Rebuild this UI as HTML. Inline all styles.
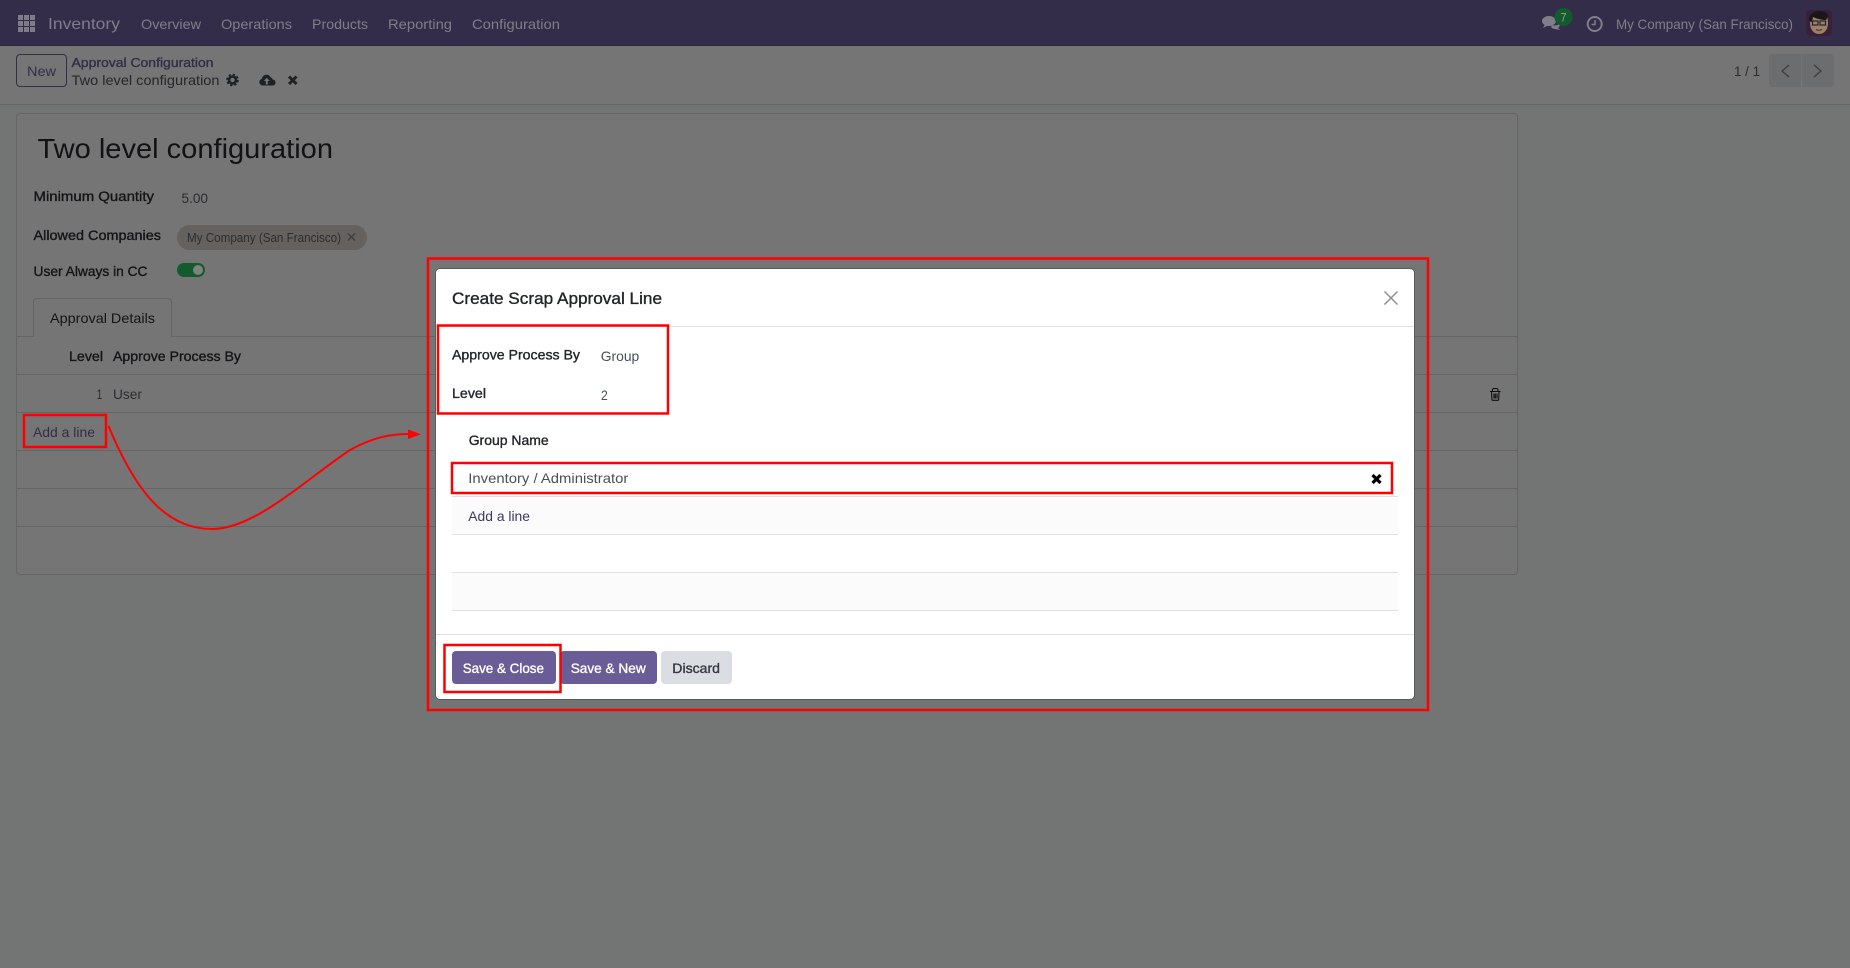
<!DOCTYPE html>
<html lang="en"><head><meta charset="utf-8"><title>Two level configuration</title>
<style>
html,body{margin:0;padding:0;width:1850px;height:968px;overflow:hidden;background:#737474}
div{position:absolute;box-sizing:border-box}
svg{position:absolute;left:0;top:0}
text{font-family:"Liberation Sans",sans-serif;font-size:14px;fill:#2a2d30}
.m{stroke:currentColor;stroke-width:.35}
.l{color:#131416;fill:#131416}
.n{fill:#807d8a}
.p{fill:#332d49}
</style></head><body>
<div style="left:0;top:0;width:1850px;height:46px;background:#332d49;border-bottom:1px solid #2b2740"></div>
<div style="left:0;top:46px;width:1850px;height:59px;background:#757575;border-bottom:1px solid #646566"></div>
<div style="left:16px;top:54px;width:51px;height:33px;border:1px solid #332d49;border-radius:4px"></div>
<div style="left:1769px;top:54px;width:32px;height:33px;background:#6b6d6f;border-radius:4px 0 0 4px"></div>
<div style="left:1802px;top:54px;width:32px;height:33px;background:#6b6d6f;border-radius:0 4px 4px 0"></div>

<div style="left:16px;top:113px;width:1502px;height:462px;background:#757575;border:1px solid #646566;border-radius:4px"></div>
<div style="left:177px;top:225px;width:190px;height:25px;background:#65615f;border-radius:13px"></div>
<div style="left:177px;top:263px;width:28px;height:14px;background:#135a2c;border-radius:7px"></div>
<div style="left:193px;top:265px;width:10px;height:10px;background:#7f837f;border-radius:50%"></div>
<div style="left:33px;top:298px;width:139px;height:39px;background:#757575;border:1px solid #646566;border-bottom:0;border-radius:4px 4px 0 0"></div>
<div style="left:17px;top:336px;width:16px;height:1px;background:#646566"></div>
<div style="left:172px;top:336px;width:1345px;height:1px;background:#646566"></div>
<div style="left:17px;top:374px;width:1500px;height:1px;background:#646566"></div>
<div style="left:17px;top:412px;width:1500px;height:1px;background:#646566"></div>
<div style="left:17px;top:450px;width:1500px;height:1px;background:#646566"></div>
<div style="left:17px;top:488px;width:1500px;height:1px;background:#646566"></div>
<div style="left:17px;top:526px;width:1500px;height:1px;background:#646566"></div>

<div style="left:436px;top:269px;width:978px;height:430px;background:#fff;border-radius:4px;box-shadow:0 0 0 1px #5a5b5b">
 <div style="left:0;top:57px;width:978px;height:1px;background:#dee2e6"></div>
 <div style="left:16px;top:227px;width:946px;height:1px;background:#dee2e6"></div>
 <div style="left:16px;top:228px;width:946px;height:38px;background:#fbfbfc;border-bottom:1px solid #dee2e6"></div>
 <div style="left:16px;top:266px;width:946px;height:38px;background:#fff;border-bottom:1px solid #dee2e6"></div>
 <div style="left:16px;top:304px;width:946px;height:38px;background:#fbfbfc;border-bottom:1px solid #dee2e6"></div>
 <div style="left:0;top:365px;width:978px;height:1px;background:#dee2e6"></div>
 <div style="left:16px;top:382px;width:104px;height:33px;background:#6a5c97;border-radius:4px"></div>
 <div style="left:124px;top:382px;width:97px;height:33px;background:#6a5c97;border-radius:4px"></div>
 <div style="left:225px;top:382px;width:71px;height:33px;background:#dadde2;border-radius:4px"></div>
</div>

<svg width="1850" height="968" viewBox="0 0 1850 968" xmlns="http://www.w3.org/2000/svg">
 <!-- nav -->
 <g fill="#7f7c88">
  <rect x="18" y="15" width="5" height="5"/><rect x="24" y="15" width="5" height="5"/><rect x="30" y="15" width="5" height="5"/>
  <rect x="18" y="21" width="5" height="5"/><rect x="24" y="21" width="5" height="5"/><rect x="30" y="21" width="5" height="5"/>
  <rect x="18" y="27" width="5" height="5"/><rect x="24" y="27" width="5" height="5"/><rect x="30" y="27" width="5" height="5"/>
 </g>
 <text class="n" x="48" y="29" style="font-size:16px" textLength="72" lengthAdjust="spacingAndGlyphs">Inventory</text>
 <text class="n" x="141" y="29" textLength="60" lengthAdjust="spacingAndGlyphs">Overview</text>
 <text class="n" x="221" y="29" textLength="71" lengthAdjust="spacingAndGlyphs">Operations</text>
 <text class="n" x="312" y="29" textLength="56" lengthAdjust="spacingAndGlyphs">Products</text>
 <text class="n" x="388" y="29" textLength="64" lengthAdjust="spacingAndGlyphs">Reporting</text>
 <text class="n" x="472" y="29" textLength="88" lengthAdjust="spacingAndGlyphs">Configuration</text>

 <g fill="#807e88">
  <ellipse cx="1549" cy="21" rx="7" ry="5"/><path d="M1545 24l-2 4 6-3z"/>
  <path d="M1552 25c3 1 6 0 8-1 0 2-1 3-2 4l2 2-5-1c-2 0-3-1-4-2z"/>
 </g>
 <circle cx="1563.5" cy="17" r="9" fill="#135a2c"/>
 <text x="1560.5" y="21.5" style="font-size:12px;fill:#98a09a" textLength="6" lengthAdjust="spacingAndGlyphs">7</text>
 <circle cx="1594.7" cy="24" r="7" fill="none" stroke="#807e88" stroke-width="2"/>
 <path d="M1595 20v4.5h-3.5" fill="none" stroke="#807e88" stroke-width="1.5"/>
 <text class="n" x="1616" y="29" textLength="177" lengthAdjust="spacingAndGlyphs">My Company (San Francisco)</text>
 <rect x="1806" y="10" width="26" height="26" rx="4" fill="#38203a"/>
 <path d="M1810 23c0-7 3-10 9-10s9 3 9 10c0 7-4 11-9 11s-9-4-9-11z" fill="#9c8068"/>
 <path d="M1809 21c-1-6 4-10 10-10 5 0 9 2 9 5l-2 4c-4 0-9-1-13-3l-1 5z" fill="#1a171b"/>
 <g fill="none" stroke="#26242a" stroke-width="1.2"><rect x="1812.5" y="21" width="5.5" height="4"/><rect x="1820" y="21" width="5.5" height="4"/></g>
 <path d="M1816 29.500c2 1 4 1 6 0" stroke="#4d3228" fill="none"/>

 <!-- control panel -->
 <text class="p" x="27" y="76" textLength="29" lengthAdjust="spacingAndGlyphs">New</text>
 <text class="p m" x="71.5" y="67" style="font-size:13px;color:#332d49" textLength="142" lengthAdjust="spacingAndGlyphs">Approval Configuration</text>
 <text x="71.5" y="85" textLength="148" lengthAdjust="spacingAndGlyphs" style="fill:#24272a">Two level configuration</text>
 <g fill="none" stroke="#1f2224"><circle cx="232.5" cy="80" r="3.5" stroke-width="2.6"/><circle cx="232.5" cy="80" r="5.2" stroke-width="2.2" stroke-dasharray="2.2 1.9"/></g>
 <path d="M262.500 85.500a3.400 3.400 0 0 1-.6-6.700 4.500 4.500 0 0 1 8.600-1.500 3.200 3.200 0 0 1 2.200 2.200 3.100 3.100 0 0 1 .8 6z" fill="#1f2224"/>
 <path d="M265.800 84.500v-3.500h-2l3-3.200 3 3.200h-2v3.500z" fill="#757575"/>
 <path d="M289 76.500l7.500 7.500M296.500 76.500l-7.500 7.500" stroke="#1f2224" stroke-width="3"/>
 <text x="1734" y="76" textLength="26" lengthAdjust="spacingAndGlyphs" style="fill:#2a2d30">1 / 1</text>
 <path d="M1789 65l-7 6 7 6M1814 65l7 6-7 6" fill="none" stroke="#3a3c3f" stroke-width="1.300"/>

 <!-- sheet -->
 <text x="37.500" y="158" style="font-size:28px;fill:#111213" textLength="295.500" lengthAdjust="spacingAndGlyphs">Two level configuration</text>
 <text class="l m" x="33.500" y="201" textLength="120.500" lengthAdjust="spacingAndGlyphs">Minimum Quantity</text>
 <text x="181.500" y="203" textLength="26.500" lengthAdjust="spacingAndGlyphs">5.00</text>
 <text class="l m" x="33.500" y="240" textLength="127.500" lengthAdjust="spacingAndGlyphs">Allowed Companies</text>
 <text x="187" y="242" style="font-size:13px" textLength="154" lengthAdjust="spacingAndGlyphs">My Company (San Francisco)</text>
 <path d="M348 233.500l7 7M355 233.500l-7 7" stroke="#3d3d3f" stroke-width="1.300"/>
 <text class="l m" x="33.500" y="276" textLength="114" lengthAdjust="spacingAndGlyphs">User Always in CC</text>
 <text x="50" y="323" style="fill:#131416" textLength="105" lengthAdjust="spacingAndGlyphs">Approval Details</text>
 <text class="l m" x="69" y="361" textLength="34" lengthAdjust="spacingAndGlyphs">Level</text>
 <text class="l m" x="113" y="361" textLength="128" lengthAdjust="spacingAndGlyphs">Approve Process By</text>
 <text x="96.700" y="399" textLength="5.500" lengthAdjust="spacingAndGlyphs">1</text>
 <text x="113" y="399" textLength="29" lengthAdjust="spacingAndGlyphs">User</text>
 <text class="p" x="33" y="437" textLength="62" lengthAdjust="spacingAndGlyphs">Add a line</text>
 <g fill="none" stroke="#111" stroke-width="1.100">
  <path d="M1490 391.500h10.500M1492.500 391.500v-1.500c0-1 .5-1.500 1.500-1.500h2.500c1 0 1.500.5 1.500 1.500v1.500M1491.500 391.500l.5 8c0 .5.300 .8 .8 .8h5c.5 0 .8-.3 .8-.8l.5-8"/>
  <path d="M1494 393.500v5M1495.300 393.500v5M1497 393.500v5"/>
 </g>

 <!-- modal -->
 <text class="m" x="452" y="304" style="font-size:17px;fill:#212529;color:#212529" textLength="210" lengthAdjust="spacingAndGlyphs">Create Scrap Approval Line</text>
 <path d="M1384.500 291.500l13 13M1397.500 291.500l-13 13" stroke="#8e8e8e" stroke-width="1.500" fill="none"/>
 <text class="m" x="452" y="359.700" style="fill:#212529;color:#212529" textLength="128" lengthAdjust="spacingAndGlyphs">Approve Process By</text>
 <text x="600.700" y="361" style="fill:#495057" textLength="38.600" lengthAdjust="spacingAndGlyphs">Group</text>
 <text class="m" x="452" y="398" style="fill:#212529;color:#212529" textLength="34" lengthAdjust="spacingAndGlyphs">Level</text>
 <text x="601" y="400" style="fill:#495057" textLength="6.800" lengthAdjust="spacingAndGlyphs">2</text>
 <text class="m" x="468.700" y="445" style="fill:#212529;color:#212529" textLength="80" lengthAdjust="spacingAndGlyphs">Group Name</text>
 <text x="468.300" y="483" style="fill:#495057" textLength="160" lengthAdjust="spacingAndGlyphs">Inventory / Administrator</text>
 <path d="M1372.500 475l8 8M1380.500 475l-8 8" stroke="#000" stroke-width="3.200" fill="none"/>
 <text x="468.300" y="521" style="fill:#3f3863" textLength="61.700" lengthAdjust="spacingAndGlyphs">Add a line</text>
 <text class="m" x="462.700" y="673" style="fill:#fff;color:#fff" textLength="81.300" lengthAdjust="spacingAndGlyphs">Save &amp; Close</text>
 <text class="m" x="570.700" y="673" style="fill:#fff;color:#fff" textLength="75" lengthAdjust="spacingAndGlyphs">Save &amp; New</text>
 <text class="m" x="672.300" y="673" style="fill:#343a40;color:#343a40" textLength="47.700" lengthAdjust="spacingAndGlyphs">Discard</text>

 <!-- annotations -->
 <g fill="none" stroke="#f00" stroke-width="2.500">
  <rect x="428" y="258.500" width="1000" height="451.500"/>
  <rect x="438" y="325.500" width="230" height="88"/>
  <rect x="452" y="463" width="940" height="30"/>
  <rect x="444.500" y="645" width="116" height="47"/>
  <rect x="24" y="415" width="82" height="32"/>
  <path d="M108.500 426C135 490 165 529 212 529C255 529 305 480 350 450C375 436 393 434 410 434" stroke-width="2"/>
 </g>
 <path d="M408 429.500l13 4.800-13 4.700z" fill="#f00"/>
</svg>
</body></html>
